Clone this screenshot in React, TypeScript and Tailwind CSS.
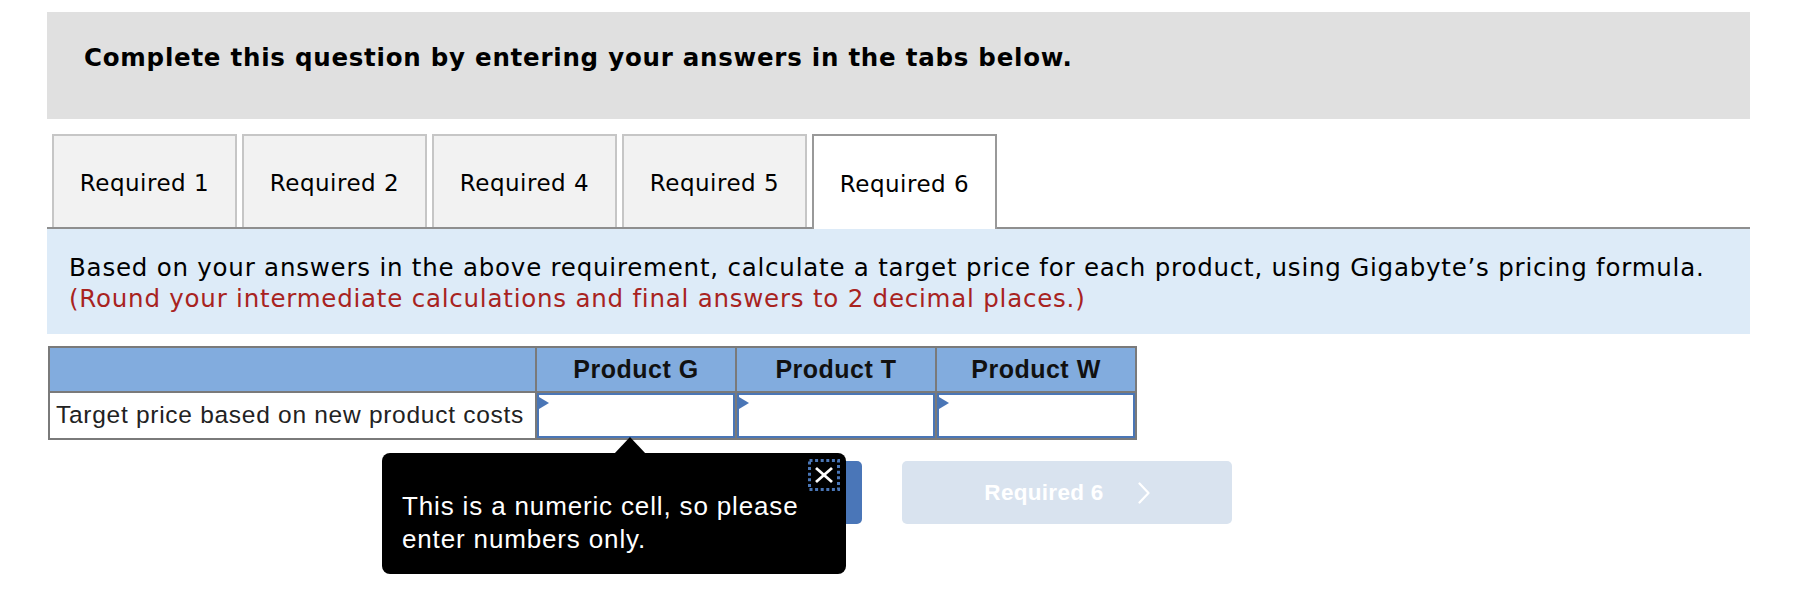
import React from "react";

const verdana = { fontFamily: '"DejaVu Sans", Verdana, sans-serif' };
const arial = { fontFamily: '"Liberation Sans", Arial, Helvetica, sans-serif' };

function Tab({ label, active }: { label: string; active?: boolean }) {
  if (active) {
    return (
      <div className="relative -mb-[2px] flex h-[95px] w-[185px] items-center justify-center border-2 border-b-0 border-[#999999] bg-white pt-[3px] text-[23px] tracking-[0.5px] text-black">
        {label}
      </div>
    );
  }
  return (
    <div className="flex h-[93px] w-[185px] items-center justify-center border-2 border-b-0 border-[#c6c6c6] bg-[#f2f2f2] pt-[4px] text-[23px] tracking-[0.5px] text-black">
      {label}
    </div>
  );
}

function InputCell() {
  return (
    <td className="h-[45px] w-[200px] border-2 border-[#7a7a7a] p-0">
      <div className="relative h-[45px] w-full border-2 border-[#4a76b6] bg-white">
        <svg className="absolute left-0 top-[2px]" width="10" height="12" viewBox="0 0 10 12">
          <polygon points="0,0 10,6 0,12" fill="#4a76b6" />
        </svg>
      </div>
    </td>
  );
}

export default function App() {
  return (
    <div className="min-h-[598px] w-[1812px] bg-white">
      <div className="ml-[47px] w-[1703px] pt-[12px]" style={verdana}>
        <div className="h-[107px] bg-[#e0e0e0] pl-[37px] pt-[31px]">
          <div className="text-[24.5px] font-bold leading-[29px] tracking-[0.75px] text-black">
            Complete this question by entering your answers in the tabs below.
          </div>
        </div>

        <div className="mt-[15px] flex gap-[5px] border-b-2 border-[#8f8f8f] pl-[5px]">
          <Tab label="Required 1" />
          <Tab label="Required 2" />
          <Tab label="Required 4" />
          <Tab label="Required 5" />
          <Tab label="Required 6" active />
        </div>

        <div className="h-[105px] bg-[#ddebf8] pl-[22px] pt-[23px] text-[24.5px] leading-[31px] tracking-[0.78px]">
          <div className="text-black">
            Based on your answers in the above requirement, calculate a target price for each product, using Gigabyte’s pricing formula.
          </div>
          <div className="text-[#a8231f]">
            (Round your intermediate calculations and final answers to 2 decimal places.)
          </div>
        </div>

        <div className="relative mt-[12px] ml-[1px]" style={arial}>
          <table className="border-collapse border-2 border-[#7a7a7a]">
            <tbody>
              <tr className="bg-[#82acde]">
                <th className="h-[45px] w-[487px] border-2 border-[#7a7a7a] p-0"></th>
                <th className="h-[45px] w-[200px] border-2 border-[#7a7a7a] p-0 text-center text-[25px] font-bold tracking-[0.5px] text-[#111]">
                  Product G
                </th>
                <th className="h-[45px] w-[200px] border-2 border-[#7a7a7a] p-0 text-center text-[25px] font-bold tracking-[0.5px] text-[#111]">
                  Product T
                </th>
                <th className="h-[45px] w-[200px] border-2 border-[#7a7a7a] p-0 text-center text-[25px] font-bold tracking-[0.5px] text-[#111]">
                  Product W
                </th>
              </tr>
              <tr>
                <td className="h-[45px] border-2 border-[#7a7a7a] bg-white py-0 pl-[6px] pr-0 text-left text-[24.5px] tracking-[0.72px] text-[#222]">
                  Target price based on new product costs
                </td>
                <InputCell />
                <InputCell />
                <InputCell />
              </tr>
            </tbody>
          </table>

          <div className="mt-[21px] flex gap-[40px] pl-[484px]">
            <div className="h-[63px] w-[330px] rounded-[5px] bg-[#4a76b8]"></div>
            <div className="flex h-[63px] w-[330px] items-center justify-center gap-[34px] rounded-[5px] bg-[#d9e3ef]">
              <span className="text-[22.5px] font-bold tracking-[0.3px] text-white">Required 6</span>
              <svg width="12" height="22" viewBox="0 0 12 22" fill="none">
                <polyline points="1.5,1.5 10.5,11 1.5,20.5" stroke="white" strokeWidth="2.2" strokeLinecap="round" strokeLinejoin="round" />
              </svg>
            </div>
          </div>

          <div className="absolute left-[334px] top-[107px] h-[121px] w-[464px] rounded-[8px] bg-black">
            <svg className="absolute left-[232px] top-[-16px]" width="32" height="17" viewBox="0 0 32 17">
              <polygon points="0,17 16,0 32,17" fill="black" />
            </svg>
            <div className="absolute right-[6px] top-[6px] h-[32px] w-[32px]">
              <svg className="absolute left-0 top-0" width="32" height="32" viewBox="0 0 32 32">
                <rect x="1.5" y="1.5" width="29" height="29" fill="none" stroke="#4a76b6" strokeWidth="3" strokeDasharray="3 2.6" />
                <line x1="8" y1="9" x2="24" y2="23" stroke="white" strokeWidth="2.8" />
                <line x1="24" y1="9" x2="8" y2="23" stroke="white" strokeWidth="2.8" />
              </svg>
            </div>
            <div className="pl-[20px] pt-[37px] text-[26px] leading-[33px] tracking-[0.85px] text-white">
              This is a numeric cell, so please
              <br />
              enter numbers only.
            </div>
          </div>
        </div>
      </div>
    </div>
  );
}
